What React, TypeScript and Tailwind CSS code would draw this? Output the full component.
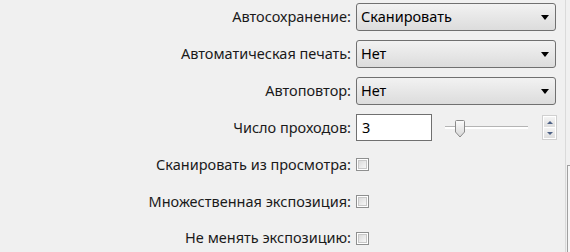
import React from "react";

const font = { fontFamily: '"Noto Sans", "Open Sans", sans-serif' };

const Combo = ({ value }: { value: string }) => (
  <div className="w-[200px] h-[28px] flex items-center justify-between pl-[4px] pr-[6px] rounded-[3px] border border-[#707070] bg-gradient-to-b from-[#f2f2f2] to-[#dcdcdc] text-black">
    <span>{value}</span>
    <svg width="8" height="5" viewBox="0 0 8 5">
      <path d="M0 0 L8 0 L4 5 Z" fill="#000" />
    </svg>
  </div>
);

const Check = () => (
  <div className="w-[13px] h-[13px] border border-[#8e8f8f] bg-white p-[1px]">
    <div className="w-full h-full bg-gradient-to-br from-[#dcdcdc] to-[#f6f6f6] border border-[#c8c8c8]" />
  </div>
);

const Row = ({ label, children }: { label: string; children: React.ReactNode }) => (
  <div className="h-[28px] flex items-center">
    <div className="w-[353px] text-right pr-[2px]">{label}</div>
    <div className="ml-[3px] flex items-center">{children}</div>
  </div>
);

const App = () => {
  return (
    <div className="w-[570px] h-[252px] bg-[#f0f0f0] flex text-[14.5px] text-[#1a1a1a]" style={font}>
      <div className="w-[565px] flex flex-col gap-[9px] pt-[3px]">
        <Row label="Автосохранение:">
          <Combo value="Сканировать" />
        </Row>
        <Row label="Автоматическая печать:">
          <Combo value="Нет" />
        </Row>
        <Row label="Автоповтор:">
          <Combo value="Нет" />
        </Row>
        <Row label="Число проходов:">
          <div className="w-[76px] h-[27px] border border-[#707070] bg-white pl-[5px] flex items-center text-black">3</div>
          <div className="ml-[13px] w-[83px] h-[20px] relative flex items-center">
            <div className="w-full h-[3px] border-t border-[#b4b4b4] bg-white" />
            <svg className="absolute left-[9px] top-[2px]" width="12" height="18" viewBox="0 0 12 18">
              <defs>
                <linearGradient id="th" x1="0" y1="0" x2="0" y2="1">
                  <stop offset="0" stopColor="#fbfbfb" />
                  <stop offset="1" stopColor="#d6d6d6" />
                </linearGradient>
              </defs>
              <path d="M1.5 1.5 Q1.5 0.5 2.5 0.5 L9.5 0.5 Q10.5 0.5 10.5 1.5 L10.5 12 L6 17 L1.5 12 Z" fill="url(#th)" stroke="#8a8a8a" />
            </svg>
          </div>
          <div className="ml-[14px] w-[15px] h-[25px] flex flex-col border border-[#d0d0d0] bg-white p-[1px] gap-[1px]">
            <div className="flex-1 flex items-center justify-center bg-gradient-to-b from-[#f4f4f4] to-[#dedede]">
              <svg width="6" height="3" viewBox="0 0 6 3"><path d="M0 3 L6 3 L3 0 Z" fill="#4d6185" /></svg>
            </div>
            <div className="flex-1 flex items-center justify-center bg-gradient-to-b from-[#f4f4f4] to-[#dedede]">
              <svg width="6" height="3" viewBox="0 0 6 3"><path d="M0 0 L6 0 L3 3 Z" fill="#4d6185" /></svg>
            </div>
          </div>
        </Row>
        <Row label="Сканировать из просмотра:">
          <Check />
        </Row>
        <Row label="Множественная экспозиция:">
          <Check />
        </Row>
        <Row label="Не менять экспозицию:">
          <Check />
        </Row>
      </div>
      <div className="flex-1 border-l border-[#dadada] flex flex-col">
        <div className="h-[165px]" />
        <div className="flex-1 ml-[1px] border-l border-t border-[#a0a0a0] bg-[#f7f7f7]" />
      </div>
    </div>
  );
};

export default App;
